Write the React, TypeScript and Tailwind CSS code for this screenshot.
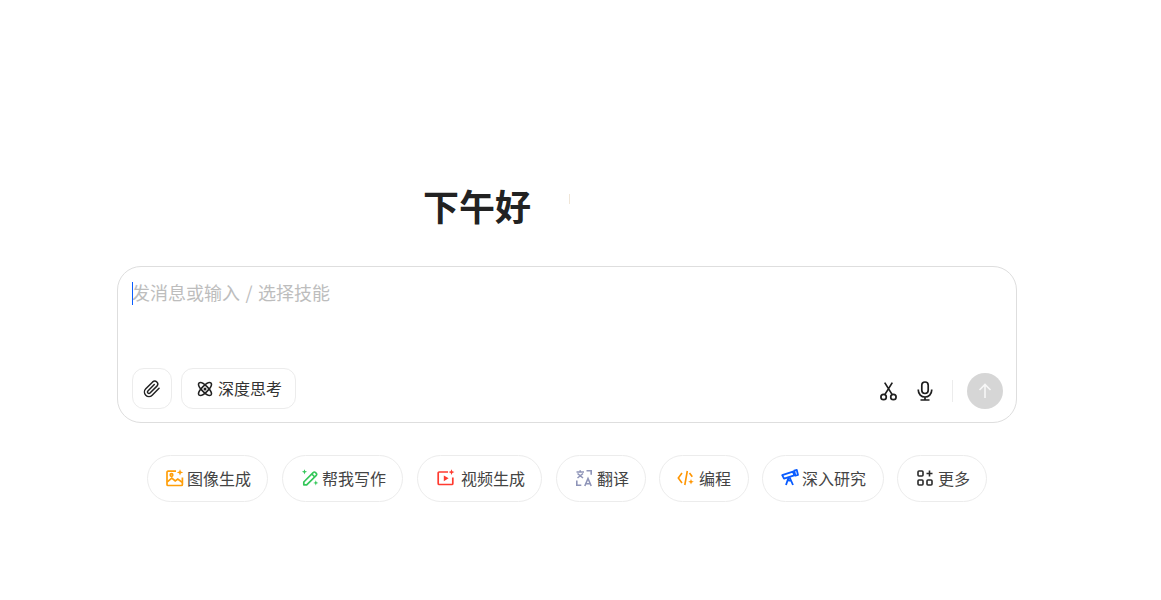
import React from "react";

const FONT = "[font-family:'Noto_Sans_CJK_SC','Liberation_Sans',sans-serif]";

const ImageGen = () => (
  <svg width="18" height="18" viewBox="0 0 18 18" fill="none" stroke="#FF9F0A" strokeWidth="1.7">
    <path d="M10 2.200H2a1 1 0 0 0-1 1v12.300a1 1 0 0 0 1 1h13.400a1 1 0 0 0 1-1V8.500" />
    <path d="M1.300 12.800 5.800 9l3.400 3 2.600-1.900 4.300 3.200" />
    <circle cx="5.500" cy="6" r="1.300" />
    <path d="M14 .2l.9 2.300 2.300.9-2.300.9-.9 2.300-.9-2.300-2.300-.9 2.300-.9z" fill="#FF9F0A" stroke="none" />
  </svg>
);
const Pen = () => (
  <svg width="18" height="18" viewBox="0 0 18 18" fill="none" stroke="#34C759" strokeWidth="1.7" strokeLinejoin="round">
    <path d="M2.800 13 12.400 3.400a1.300 1.300 0 0 1 1.900 0l1 1a1.300 1.300 0 0 1 0 1.900L5.700 15.800H2.800z" />
    <path d="M10.800 5l3 3" />
    <path d="M3.500.2l.7 1.900 1.900.7-1.900.7-.7 1.900-.7-1.900-1.900-.7 1.900-.7zM14.800 11.300l.7 1.900 1.900.7-1.900.7-.7 1.900-.7-1.900-1.900-.7 1.900-.7z" fill="#34C759" stroke="none" />
  </svg>
);
const Video = () => (
  <svg width="18" height="18" viewBox="0 0 18 18" fill="none" stroke="#FF3B30" strokeWidth="1.700">
    <path d="M11 3H2.200a1 1 0 0 0-1 1v10.500a1 1 0 0 0 1 1h12.600a1 1 0 0 0 1-1V8.500" />
    <path d="M6.800 6.400v5.800l4.800-2.900z" fill="#FF3B30" stroke="none" />
    <path d="M14.500 .2l.8 2.100 2.100.8-2.100.8-.8 2.100-.8-2.100-2.100-.8 2.100-.8z" fill="#FF3B30" stroke="none" />
  </svg>
);
const Translate = () => (
  <svg width="18" height="18" viewBox="0 0 18 18" fill="none" stroke="#8E94B8" strokeWidth="1.600">
    <path d="M1.500 3h7.500M5.200 1.200V3M2.500 4.500l5.500 4.500M8 4.500 2.500 9" />
    <path d="M11.500 1.800h4.700v4M1.800 11.500v4.700h4.500" />
    <path d="M9.800 17 13 9.500l3.200 7.500M11 14.700h4" />
  </svg>
);
const Code = () => (
  <svg width="18" height="18" viewBox="0 0 18 18" fill="none" stroke="#FF9500" strokeWidth="1.600">
    <path d="M5 4 1.300 9 5 14M10.300 2 7.800 16M12.500 4l2.800 3.800" />
    <path d="M14 10l.8 2 2 .8-2 .8-.8 2-.8-2-2-.8 2-.8z" fill="#FF9500" stroke="none" />
  </svg>
);
const Telescope = () => (
  <svg width="18" height="18" viewBox="0 0 18 18" fill="none" stroke="#0A5CFF" strokeWidth="1.800" strokeLinejoin="round">
    <path d="M1.200 6.200 12 2.600l1.200 3.800L3 9.600z" />
    <path d="M13.200 1.600l2.600-.6 1.200 5-2.600.7z" />
    <path d="M7.600 8.400 5 16M8.600 8.400l3.400 7.600M7.400 11.500h2.200" />
  </svg>
);
const Grid = () => (
  <svg width="18" height="18" viewBox="0 0 18 18" fill="none" stroke="#2a2a2a" strokeWidth="1.600">
    <rect x="2" y="2" width="5" height="5" rx="1" />
    <rect x="2" y="11" width="5" height="5" rx="1" />
    <rect x="11" y="11" width="5" height="5" rx="1" />
    <path d="M13.500 1.500v6M10.500 4.500h6" />
  </svg>
);
const Clip = () => (
  <svg width="18" height="18" viewBox="0 0 24 24" fill="none" stroke="#222" strokeWidth="2" strokeLinecap="round" strokeLinejoin="round">
    <path d="M21.400 11.050l-9.200 9.200a6 6 0 0 1-8.500-8.500l9.200-9.200a4 4 0 0 1 5.650 5.650l-9.200 9.200a2 2 0 0 1-2.830-2.830l8.500-8.500" />
  </svg>
);
const Atom = () => (
  <svg width="16" height="16" viewBox="0 0 16 16" fill="none" stroke="#222" strokeWidth="1.600">
    <path d="M2 2c2-1.600 5.400 1 8 3.600S15.600 12 14 14c-2 1.600-5.400-1-8-3.600S.4 4 2 2z" />
    <path d="M14 2c-2-1.600-5.400 1-8 3.600S.4 12 2 14c2 1.600 5.400-1 8-3.600S15.600 4 14 2z" />
    <circle cx="8" cy="8" r="1.500" fill="#222" stroke="none" />
  </svg>
);
const Scissors = () => (
  <svg width="17" height="19" viewBox="0 0 17 19" fill="none" stroke="#1f1f1f" strokeWidth="1.700">
    <circle cx="3.600" cy="15" r="2.700" />
    <circle cx="13.400" cy="15" r="2.700" />
    <path d="M4.800 12.600 12.300 .6M12.200 12.600 4.700 .6" />
  </svg>
);
const Mic = () => (
  <svg width="16" height="20" viewBox="0 0 16 20" fill="none" stroke="#1f1f1f" strokeWidth="1.700">
    <rect x="4.800" y="1" width="6.400" height="11.500" rx="3.200" />
    <path d="M1.300 8.500v.8a6.700 6.700 0 0 0 13.400 0v-.8M8 16v3M3.500 19h9" />
  </svg>
);
const Arrow = () => (
  <svg width="18" height="18" viewBox="0 0 18 18" fill="none" stroke="#fff" strokeOpacity="0.8" strokeWidth="1.600">
    <path d="M9 16V2.500M3.500 8 9 2.500 14.500 8" />
  </svg>
);

const chips: [React.ReactNode, string, string][] = [
  [<ImageGen />, "图像生成", "w-[121px] pl-[18px] gap-[3px]"],
  [<Pen />, "帮我写作", "w-[121px] pl-[18px] gap-[3px]"],
  [<Video />, "视频生成", "w-[125px] pl-[19px] gap-[6px]"],
  [<Translate />, "翻译", "w-[90px] pl-[18px] gap-[4px]"],
  [<Code />, "编程", "w-[90px] pl-[17px] gap-[4px] -ml-px"],
  [<Telescope />, "深入研究", "w-[122px] pl-[18px] gap-[3px] -ml-px"],
  [<Grid />, "更多", "w-[90px] pl-[18px] gap-[4px] -ml-px"],
];

export default function App() {
  return (
    <div className={`${FONT} w-[1134px] h-[600px] bg-white flex flex-col items-center text-[#222]`}>
      <div className="mt-[178px] h-[54px] w-[286px] flex items-center">
        <h1 className="text-[36px] leading-[54px] font-bold text-[#222] w-[145px] -ml-px">下午好</h1>
        <div className="w-px h-[10px] mb-[12px] ml-px bg-[#f0e6d8]" />
      </div>

      <div className="mt-[34px] w-[900px] h-[157px] rounded-[24px] border border-[#dedede] bg-white pl-[14px] pr-[13px] pt-[13px] pb-[13px] flex flex-col justify-between">
        <div className="relative h-[28px] text-[18px] leading-[24px] text-[#bdbdbd] [word-spacing:1.5px]">
          <span className="absolute left-0 top-[2px] w-px h-[23px] bg-[#0a5cff]" />
          发消息或输入 / 选择技能
        </div>
        <div className="flex items-end justify-between">
          <div className="flex items-center gap-[9px]">
            <button className="w-[40px] h-[41px] rounded-[12px] border border-[#ececec] flex items-center justify-center">
              <Clip />
            </button>
            <button className="w-[115px] h-[41px] pl-[15px] pb-[2px] rounded-[12px] border border-[#ececec] flex items-center justify-start gap-[5px] text-[16px] text-[#333]">
              <span className="mt-[2px]"><Atom /></span>
              深度思考
            </button>
          </div>
          <div className="flex items-center">
            <Scissors />
            <span className="ml-[20px]"><Mic /></span>
            <span className="ml-[19px] w-px h-[22px] bg-[#ececec]" />
            <button className="ml-[14px] w-[36px] h-[36px] rounded-full bg-[#d6d6d6] flex items-center justify-center">
              <Arrow />
            </button>
          </div>
        </div>
      </div>

      <div className="mt-[32px] flex gap-[14px]">
        {chips.map(([icon, label, cls]) => (
          <div key={label} className={`${cls} h-[47px] pb-[2px] rounded-full border border-[#ececec] flex items-center justify-start text-[16px] text-[#444]`}>
            {icon}
            <span>{label}</span>
          </div>
        ))}
      </div>
    </div>
  );
}
